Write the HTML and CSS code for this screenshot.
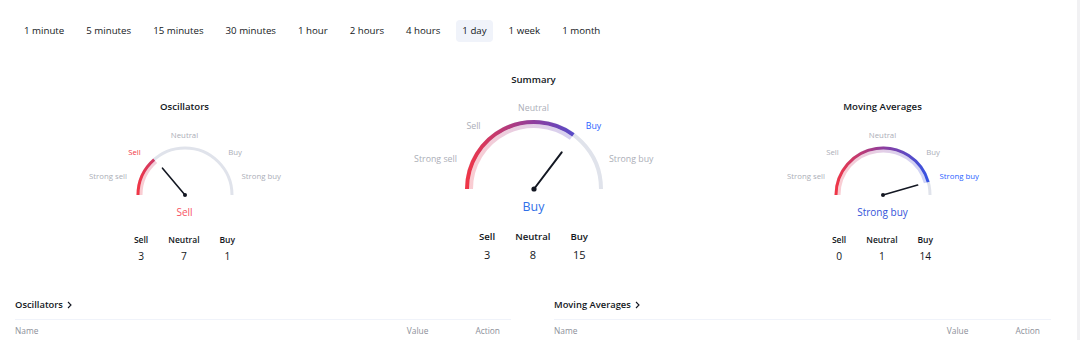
FILE: index.html
```html
<!DOCTYPE html>
<html>
<head>
    <title>Technicals</title>
    <link rel="stylesheet" href="styles.css">
</head>
<body>
<div class="page">

    <div class="tabs">
        <span class="tab">1 minute</span>
        <span class="tab">5 minutes</span>
        <span class="tab">15 minutes</span>
        <span class="tab">30 minutes</span>
        <span class="tab">1 hour</span>
        <span class="tab">2 hours</span>
        <span class="tab">4 hours</span>
        <span class="tab active">1 day</span>
        <span class="tab">1 week</span>
        <span class="tab">1 month</span>
    </div>

    <div class="gauges">
        <!-- Oscillators -->
        <div class="gauge-col side">
            <div class="gauge-title">Oscillators</div>
            <div class="gauge gauge-sm">
                <svg class="dial" width="200" height="72" viewBox="0 0 200 72">
                    <defs>
                        <linearGradient id="grad-osc" gradientUnits="userSpaceOnUse" x1="52" y1="0" x2="148" y2="0">
                            <stop offset="0" stop-color="#f23645"/>
                            <stop offset="0.5" stop-color="#8e3d9e"/>
                            <stop offset="1" stop-color="#2f55e8"/>
                        </linearGradient>
                    </defs>
                    <path class="track" stroke-width="3" d="M53 67 A47 47 0 0 1 147 67"/>
                    <path class="band" stroke="url(#grad-osc)" stroke-width="3" d="M56 67 A44 44 0 0 1 71.13 33.79"/>
                    <path class="arc" stroke="url(#grad-osc)" stroke-width="3" d="M53 67 A47 47 0 0 1 69.17 31.53"/>
                    <line class="needle" stroke-width="1.6" x1="100" y1="67" x2="77.5" y2="40.2"/>
                    <circle class="pivot" cx="100" cy="67" r="2"/>
                </svg>
                <span class="lbl lbl-neutral">Neutral</span>
                <span class="lbl lbl-sell on-sell">Sell</span>
                <span class="lbl lbl-buy">Buy</span>
                <span class="lbl lbl-ssell">Strong sell</span>
                <span class="lbl lbl-sbuy">Strong buy</span>
            </div>
            <div class="result sell">Sell</div>
            <div class="counts">
                <div class="count"><div class="count-name">Sell</div><div class="count-num">3</div></div>
                <div class="count"><div class="count-name">Neutral</div><div class="count-num">7</div></div>
                <div class="count"><div class="count-name">Buy</div><div class="count-num">1</div></div>
            </div>
        </div>

        <!-- Summary -->
        <div class="gauge-col main">
            <div class="gauge-title">Summary</div>
            <div class="gauge gauge-lg">
                <svg class="dial" width="280" height="93" viewBox="0 0 280 93">
                    <defs>
                        <linearGradient id="grad-sum" gradientUnits="userSpaceOnUse" x1="71" y1="0" x2="209" y2="0">
                            <stop offset="0" stop-color="#f23645"/>
                            <stop offset="0.5" stop-color="#8e3d9e"/>
                            <stop offset="1" stop-color="#2f55e8"/>
                        </linearGradient>
                    </defs>
                    <path class="track" stroke-width="4" d="M73 89 A67 67 0 0 1 207 89"/>
                    <path class="band" stroke="url(#grad-sum)" stroke-width="4" d="M77 89 A63 63 0 0 1 177.03 38.03"/>
                    <path class="arc" stroke="url(#grad-sum)" stroke-width="4" d="M73 89 A67 67 0 0 1 179.38 34.8"/>
                    <line class="needle" stroke-width="2" x1="140" y1="89" x2="167.7" y2="52.3"/>
                    <circle class="pivot" cx="140" cy="89" r="2.6"/>
                </svg>
                <span class="lbl lbl-neutral">Neutral</span>
                <span class="lbl lbl-sell">Sell</span>
                <span class="lbl lbl-buy on-buy">Buy</span>
                <span class="lbl lbl-ssell">Strong sell</span>
                <span class="lbl lbl-sbuy">Strong buy</span>
            </div>
            <div class="result buy">Buy</div>
            <div class="counts">
                <div class="count"><div class="count-name">Sell</div><div class="count-num">3</div></div>
                <div class="count"><div class="count-name">Neutral</div><div class="count-num">8</div></div>
                <div class="count"><div class="count-name">Buy</div><div class="count-num">15</div></div>
            </div>
        </div>

        <!-- Moving Averages -->
        <div class="gauge-col side">
            <div class="gauge-title">Moving Averages</div>
            <div class="gauge gauge-sm">
                <svg class="dial" width="200" height="72" viewBox="0 0 200 72">
                    <defs>
                        <linearGradient id="grad-ma" gradientUnits="userSpaceOnUse" x1="52" y1="0" x2="148" y2="0">
                            <stop offset="0" stop-color="#f23645"/>
                            <stop offset="0.5" stop-color="#8e3d9e"/>
                            <stop offset="1" stop-color="#2f55e8"/>
                        </linearGradient>
                    </defs>
                    <path class="track" stroke-width="3" d="M53 67 A47 47 0 0 1 147 67"/>
                    <path class="band" stroke="url(#grad-ma)" stroke-width="3" d="M56 67 A44 44 0 0 1 142.3 54.87"/>
                    <path class="arc" stroke="url(#grad-ma)" stroke-width="3" d="M53 67 A47 47 0 0 1 145.18 54.05"/>
                    <line class="needle" stroke-width="1.6" x1="100" y1="67" x2="134.6" y2="57.1"/>
                    <circle class="pivot" cx="100" cy="67" r="2"/>
                </svg>
                <span class="lbl lbl-neutral">Neutral</span>
                <span class="lbl lbl-sell">Sell</span>
                <span class="lbl lbl-buy">Buy</span>
                <span class="lbl lbl-ssell">Strong sell</span>
                <span class="lbl lbl-sbuy on-buy">Strong buy</span>
            </div>
            <div class="result buy">Strong buy</div>
            <div class="counts">
                <div class="count"><div class="count-name">Sell</div><div class="count-num">0</div></div>
                <div class="count"><div class="count-name">Neutral</div><div class="count-num">1</div></div>
                <div class="count"><div class="count-name">Buy</div><div class="count-num">14</div></div>
            </div>
        </div>
    </div>

    <div class="tables">
        <div class="table">
            <div class="table-title">Oscillators
                <svg class="chev" width="5" height="8" viewBox="0 0 5 8"><path d="M1 1l3 3-3 3"/></svg>
            </div>
            <div class="table-head">
                <span class="th-name">Name</span>
                <span class="th-value">Value</span>
                <span class="th-action">Action</span>
            </div>
        </div>
        <div class="table">
            <div class="table-title">Moving Averages
                <svg class="chev" width="5" height="8" viewBox="0 0 5 8"><path d="M1 1l3 3-3 3"/></svg>
            </div>
            <div class="table-head">
                <span class="th-name">Name</span>
                <span class="th-value">Value</span>
                <span class="th-action">Action</span>
            </div>
        </div>
    </div>

</div>
</body>
</html>
```

FILE: styles.css
```css
body {
    font-family: "Open Sans", Arial, sans-serif;
    color: #131722;
    margin: 0;
    padding: 0;
    background-color: #fff;
}

.page {
    width: 1080px;
    height: 340px;
    box-sizing: border-box;
    border-right: 3px solid #f1f1f3; /* scrollbar strip */
    overflow: hidden;
}

/* interval tabs */
.tabs {
    display: flex;
    gap: 10px;
    padding: 20px 0 0 18px;
}

.tab {
    font-size: 9.7px;
    line-height: 22px;
    padding: 0 6px;
    border-radius: 4px;
    white-space: nowrap;
}

.tab.active {
    background-color: #f0f3fa;
}

/* gauges */
.gauges {
    display: grid;
    grid-template-columns: repeat(3, 349px);
    margin: 31px 0 0 10px;
    align-items: start;
}

.gauge-col {
    display: flex;
    flex-direction: column;
    align-items: center;
}

.gauge-col.side {
    padding-top: 27px;
}

.gauge-title {
    font-size: 9.6px;
    font-weight: 600;
    line-height: 14px;
}

.gauge {
    position: relative;
}

.gauge-sm {
    width: 200px;
    height: 72px;
    margin-top: 14px;
}

.gauge-lg {
    width: 280px;
    height: 93px;
    margin-top: 13px;
}

.dial {
    display: block;
}

.track,
.band,
.arc {
    fill: none;
}

.track {
    stroke: #e0e3eb;
}

.band {
    stroke-opacity: 0.25;
}

.needle {
    stroke: #131722;
    stroke-linecap: round;
}

.pivot {
    fill: #131722;
}

.lbl {
    position: absolute;
    font-size: 7.8px;
    line-height: 10px;
    color: #abaeb7;
    white-space: nowrap;
    transform: translate(-50%, -50%);
}

.gauge-lg .lbl {
    font-size: 8.8px;
}

.lbl.on-sell {
    color: #f23645;
}

.lbl.on-buy {
    color: #2962ff;
}

.gauge-sm .lbl-neutral { left: 100px; top: 7px; }
.gauge-sm .lbl-sell { left: 50px; top: 24px; }
.gauge-sm .lbl-buy { left: 150.5px; top: 24px; }
.gauge-sm .lbl-ssell { left: auto; right: 157.5px; top: 48px; transform: translateY(-50%); }
.gauge-sm .lbl-sbuy { left: 157px; top: 48px; transform: translateY(-50%); }

.gauge-lg .lbl-neutral { left: 140px; top: 8px; }
.gauge-lg .lbl-sell { left: 80px; top: 26px; }
.gauge-lg .lbl-buy { left: 200px; top: 26px; }
.gauge-lg .lbl-ssell { left: auto; right: 216.5px; top: 59px; transform: translateY(-50%); }
.gauge-lg .lbl-sbuy { left: 215.5px; top: 59px; transform: translateY(-50%); }

.result {
    font-size: 10px;
    font-weight: 500;
    line-height: 16px;
    margin-top: 4px;
}

.main .result {
    font-size: 12.4px;
    line-height: 18px;
    margin-top: 5px;
}

.result.sell {
    color: #f7525f;
}

.result.buy {
    color: #2f6fe8;
}

.gauge-col.side:last-child .result.buy {
    color: #3553d9;
}

.counts {
    display: flex;
    gap: 20px;
    margin-top: 13px;
}

.main .counts {
    margin-top: 14px;
}

.count {
    display: flex;
    flex-direction: column;
    align-items: center;
}

.count-name {
    font-size: 8.5px;
    font-weight: 600;
    line-height: 14px;
}

.main .count-name {
    font-size: 9.6px;
}

.count-num {
    font-size: 10.2px;
    line-height: 16px;
    margin-top: 1px;
}

.main .count-num {
    font-size: 11px;
    margin-top: 3px;
}

/* tables below */
.tables {
    display: grid;
    grid-template-columns: 496px 497px;
    gap: 43px;
    padding-left: 15px;
    margin-top: 34px;
}

.table-title {
    font-size: 9.4px;
    font-weight: 600;
    line-height: 14px;
    padding-bottom: 7px;
    border-bottom: 1px solid #f0f3fa;
    display: flex;
    align-items: center;
    gap: 4px;
}

.chev path {
    fill: none;
    stroke: #131722;
    stroke-width: 1.1;
}

.table-head {
    display: flex;
    margin-top: 5px;
    font-size: 8.4px;
    line-height: 12px;
    color: #8c8f99;
}

.th-name {
    flex: 1;
}

.th-value {
    margin-right: 47px;
}

.th-action {
    margin-right: 11px;
}
```
